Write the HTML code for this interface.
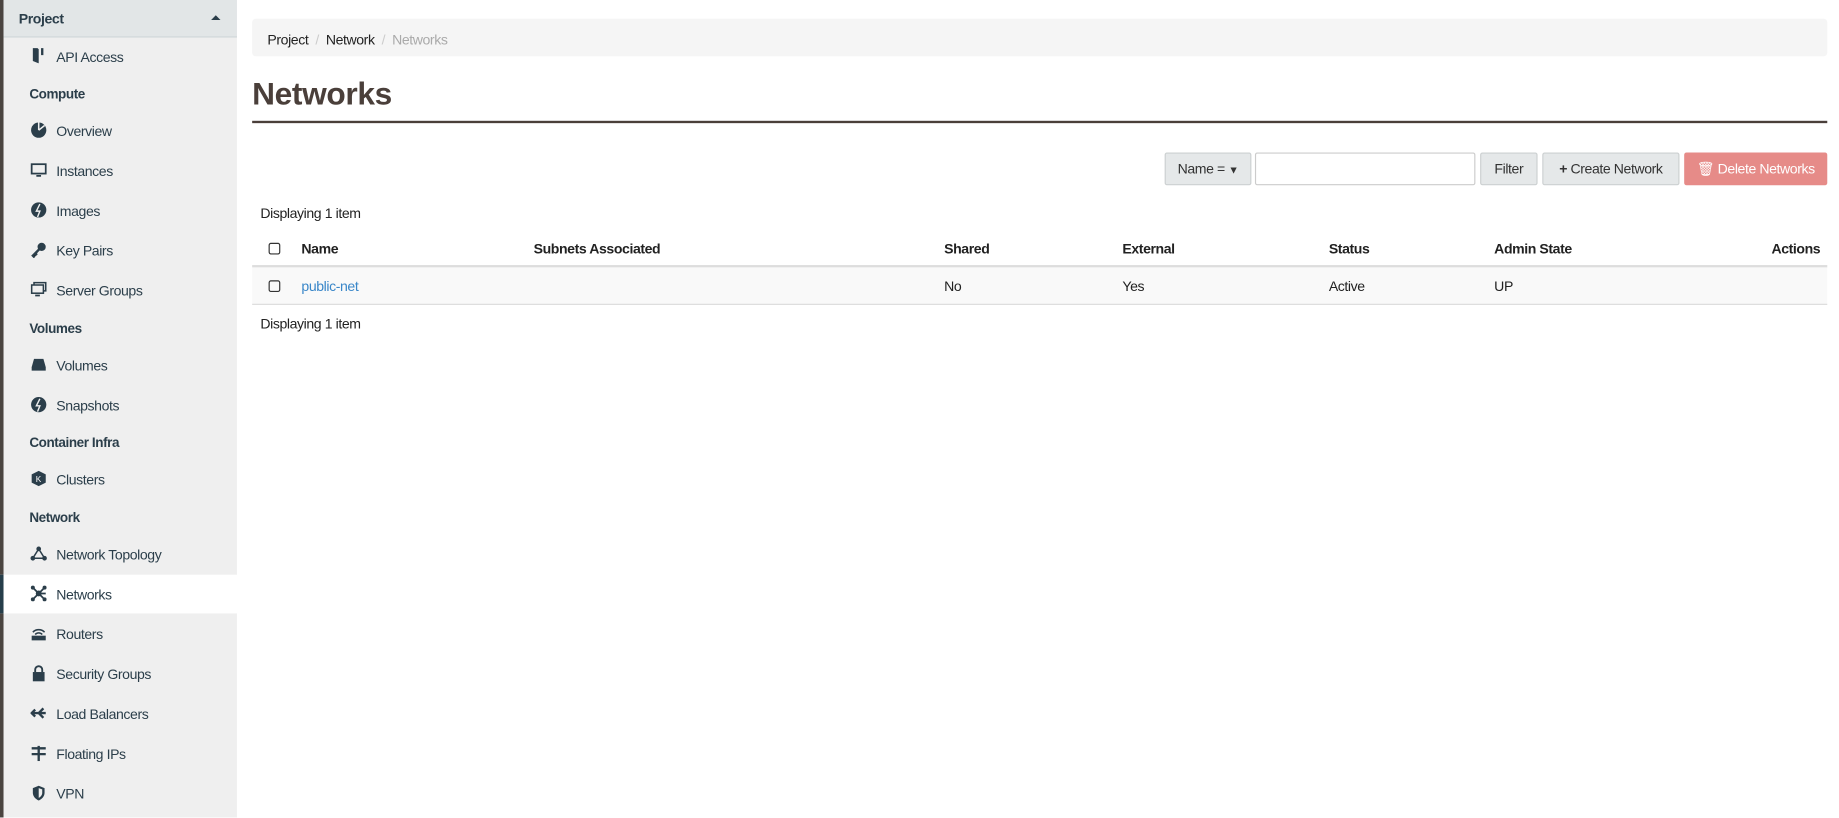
<!DOCTYPE html>
<html><head><meta charset="utf-8"><style>
html,body{margin:0;padding:0;width:1839px;height:818px;overflow:hidden;background:#fff}
#w{position:absolute;left:0;top:0;width:1568px;height:697px;transform:scale(1.17283);transform-origin:0 0;font-family:"Liberation Sans",sans-serif;font-size:12px;color:#333;letter-spacing:-0.35px}
.a{position:absolute;white-space:nowrap}
#sb{position:absolute;left:0;top:0;width:202px;height:697px;background:#efefef;border-left:3px solid #4a4440;box-sizing:border-box}
.it{position:absolute;left:45px;color:#2b3e4a;font-size:12px;line-height:14px;margin-top:1px}
.hd{position:absolute;left:22px;color:#2b3e4a;font-weight:bold;font-size:11.5px;line-height:14px;margin-top:1px}
.ic{position:absolute;left:23px;width:14px;height:14px}
.btn{position:absolute;top:130px;height:28px;box-sizing:border-box;border:1px solid #ccd0d1;background:#e5e8e9;border-radius:2px;line-height:27px;text-align:center;font-size:12px;color:#333}
.th{position:absolute;top:205px;font-weight:bold;color:#222}
.td{position:absolute;top:237px;color:#222}
.cb{position:absolute;left:229px;width:8px;height:8px;border:1px solid #333;border-radius:2px}
</style></head><body><div id="w">
<div id="sb">
 <div style="position:absolute;left:0;top:0;width:199px;height:31px;background:#e2e6e7;border-bottom:1px solid #cfd6d8"></div>
 <div class="hd" style="left:13px;top:8px;font-size:12px">Project</div>
 <div style="position:absolute;left:177px;top:13px;border-left:4px solid transparent;border-right:4px solid transparent;border-bottom:4px solid #2b3e4a"></div>
 <div style="position:absolute;left:-3px;top:490px;width:202px;height:33px;background:#fff;border-left:3px solid #263e4a"></div>
 <svg class="ic" style="top:40px" viewBox="0 0 14 14"><path d="M2 1h4l1 1v12L2 12z M9 1h2v6H9z" fill="#2b3e4a"/></svg><div class="it" style="top:41px">API Access</div>
 <div class="hd" style="top:73px">Compute</div>
 <svg class="ic" style="top:104px" viewBox="0 0 14 14"><circle cx="7" cy="7" r="6.5" fill="#2b3e4a"/><path d="M7 7L7 0.5M7 7L12 3" stroke="#efefef" stroke-width="1.3"/></svg><div class="it" style="top:104px">Overview</div>
 <svg class="ic" style="top:138px" viewBox="0 0 14 14"><rect x="1" y="2" width="12" height="8" fill="none" stroke="#2b3e4a" stroke-width="1.5"/><path d="M5 12h4" stroke="#2b3e4a" stroke-width="1.5"/></svg><div class="it" style="top:138px">Instances</div>
 <svg class="ic" style="top:172px" viewBox="0 0 14 14"><circle cx="7" cy="7" r="6.5" fill="#2b3e4a"/><path d="M8 2L5 8h3l-2 5" stroke="#efefef" stroke-width="1.2" fill="none"/></svg><div class="it" style="top:172px">Images</div>
 <svg class="ic" style="top:206px" viewBox="0 0 14 14"><circle cx="9.5" cy="4.5" r="3.5" fill="#2b3e4a"/><path d="M8 6L2 12l1.5 1.5M4 10l1.5 1.5" stroke="#2b3e4a" stroke-width="2"/></svg><div class="it" style="top:206px">Key Pairs</div>
 <svg class="ic" style="top:240px" viewBox="0 0 14 14"><rect x="3" y="1" width="10" height="7" fill="none" stroke="#2b3e4a" stroke-width="1.3"/><rect x="1" y="3" width="10" height="7" fill="#efefef" stroke="#2b3e4a" stroke-width="1.3"/><path d="M4 12h4" stroke="#2b3e4a" stroke-width="1.5"/></svg><div class="it" style="top:240px">Server Groups</div>
 <div class="hd" style="top:273px">Volumes</div>
 <svg class="ic" style="top:304px" viewBox="0 0 14 14"><path d="M3 2h8l2 7v3H1V9z" fill="#2b3e4a"/></svg><div class="it" style="top:304px">Volumes</div>
 <svg class="ic" style="top:338px" viewBox="0 0 14 14"><circle cx="7" cy="7" r="6.5" fill="#2b3e4a"/><path d="M8 2L5 8h3l-2 5" stroke="#efefef" stroke-width="1.2" fill="none"/></svg><div class="it" style="top:338px">Snapshots</div>
 <div class="hd" style="top:370px">Container Infra</div>
 <svg class="ic" style="top:401px" viewBox="0 0 14 14"><path d="M7 0.5l6 3v7l-6 3-6-3v-7z" fill="#2b3e4a"/><text x="4.5" y="10" font-size="7" fill="#fff" font-family="Liberation Sans">K</text></svg><div class="it" style="top:401px">Clusters</div>
 <div class="hd" style="top:434px">Network</div>
 <svg class="ic" style="top:465px" viewBox="0 0 14 14"><path d="M7 3L2 11h10z" fill="none" stroke="#2b3e4a" stroke-width="1.3"/><circle cx="7" cy="3" r="2" fill="#2b3e4a"/><circle cx="2" cy="11" r="2" fill="#2b3e4a"/><circle cx="12" cy="11" r="2" fill="#2b3e4a"/></svg><div class="it" style="top:465px">Network Topology</div>
 <svg class="ic" style="top:499px" viewBox="0 0 14 14"><path d="M2 2L12 12M12 2L2 12M7 7h6" stroke="#2b3e4a" stroke-width="1.5"/><circle cx="7" cy="7" r="2.5" fill="#2b3e4a"/><circle cx="2" cy="2" r="1.7" fill="#2b3e4a"/><circle cx="12" cy="2" r="1.7" fill="#2b3e4a"/><circle cx="2" cy="12" r="1.7" fill="#2b3e4a"/><circle cx="12" cy="12" r="1.7" fill="#2b3e4a"/></svg><div class="it" style="top:499px">Networks</div>
 <svg class="ic" style="top:533px" viewBox="0 0 14 14"><path d="M2 6a7 7 0 0 1 10 0M4 8a4 4 0 0 1 6 0" stroke="#2b3e4a" stroke-width="1.3" fill="none"/><rect x="1" y="9" width="12" height="4" fill="#2b3e4a"/></svg><div class="it" style="top:533px">Routers</div>
 <svg class="ic" style="top:567px" viewBox="0 0 14 14"><path d="M4 6V4a3 3 0 0 1 6 0v2" stroke="#2b3e4a" stroke-width="1.6" fill="none"/><rect x="2" y="6" width="10" height="8" fill="#2b3e4a"/></svg><div class="it" style="top:567px">Security Groups</div>
 <svg class="ic" style="top:601px" viewBox="0 0 14 14"><path d="M1 7h12M7 7L11 3M7 7l4 4M4 4L1 7l3 3" stroke="#2b3e4a" stroke-width="2" fill="none"/></svg><div class="it" style="top:601px">Load Balancers</div>
 <svg class="ic" style="top:635px" viewBox="0 0 14 14"><path d="M1 3h12M1 8h12M7 1v13" stroke="#2b3e4a" stroke-width="2"/></svg><div class="it" style="top:635px">Floating IPs</div>
 <svg class="ic" style="top:669px" viewBox="0 0 14 14"><path d="M7 1l5 2v4c0 3-2.5 5.5-5 6.5C4.5 12.5 2 10 2 7V3z" fill="#2b3e4a"/><path d="M7 3l3 1v3c0 2-1.5 3.5-3 4.3z" fill="#efefef"/></svg><div class="it" style="top:669px">VPN</div>
</div>

<div class="a" style="left:215px;top:16px;width:1343px;height:32px;background:#f5f5f5;border-radius:3px"></div>
<div class="a" style="left:228px;top:27px;color:#222">Project <span style="color:#ccc">&nbsp;/&nbsp;</span> Network <span style="color:#ccc">&nbsp;/&nbsp;</span> <span style="color:#aaa">Networks</span></div>
<div class="a" style="left:215px;top:65px;font-size:27px;font-weight:bold;color:#4a3f3a;letter-spacing:-0.3px">Networks</div>
<div class="a" style="left:215px;top:103px;width:1343px;height:2px;background:#4a3f3a"></div>

<div class="btn" style="left:993px;width:74px">Name = <span style="font-size:9px">&#9660;</span></div>
<div class="btn" style="left:1070px;width:188px;background:#fff;border-color:#ccc"></div>
<div class="btn" style="left:1262px;width:49px">Filter</div>
<div class="btn" style="left:1315px;width:117px"><b>+</b> Create Network</div>
<div class="btn" style="left:1436px;width:122px;background:#e68b88;border-color:#e68b88;color:#fff">&#128465; Delete Networks</div>

<div class="a" style="left:222px;top:175px;color:#222">Displaying 1 item</div>
<div class="cb" style="top:207px"></div>
<div class="th" style="left:257px">Name</div>
<div class="th" style="left:455px">Subnets Associated</div>
<div class="th" style="left:805px">Shared</div>
<div class="th" style="left:957px">External</div>
<div class="th" style="left:1133px">Status</div>
<div class="th" style="left:1274px">Admin State</div>
<div class="th" style="right:16px">Actions</div>
<div class="a" style="left:215px;top:226px;width:1343px;height:2px;background:#ddd"></div>
<div class="a" style="left:215px;top:228px;width:1343px;height:31px;background:#f9f9f9;border-bottom:1px solid #ddd"></div>
<div class="cb" style="top:239px"></div>
<div class="td" style="left:257px;color:#3a87c9">public-net</div>
<div class="td" style="left:805px">No</div>
<div class="td" style="left:957px">Yes</div>
<div class="td" style="left:1133px">Active</div>
<div class="td" style="left:1274px">UP</div>
<div class="a" style="left:222px;top:269px;color:#222">Displaying 1 item</div>
</div></body></html>
